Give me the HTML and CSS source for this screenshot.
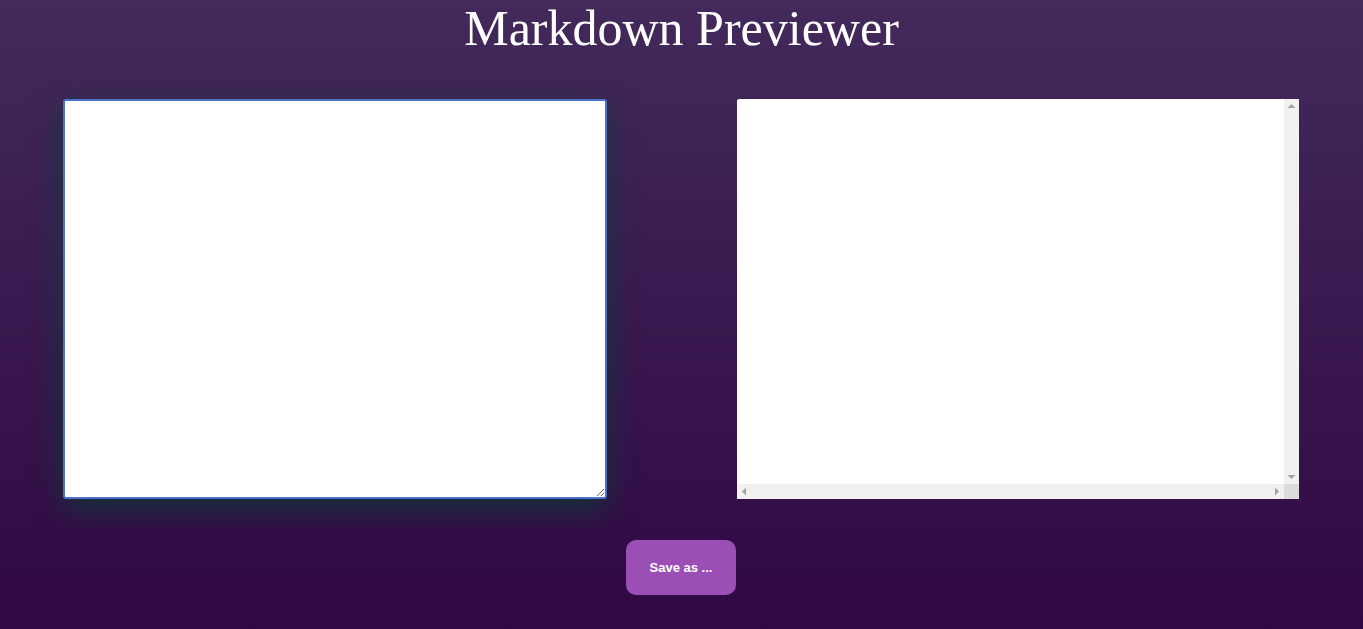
FILE: index.html
```html
<!DOCTYPE html>
<html lang="en">
<head>
<meta charset="utf-8">
<title>Markdown Previewer</title>
<link rel="stylesheet" href="styles.css">
</head>
<body>
  <h1 class="title">Markdown Previewer</h1>
  <main class="panes">
    <textarea class="editor" autofocus></textarea>
    <div class="preview">
      <div class="preview-content"></div>
      <div class="vscroll">
        <svg class="arrow" width="15" height="15" viewBox="0 0 15 15"><path d="M3.5 9 L11.5 9 L7.5 5 Z" fill="#a3a3a3"/></svg>
        <svg class="arrow" width="15" height="15" viewBox="0 0 15 15"><path d="M3.5 6 L11.5 6 L7.5 10 Z" fill="#a3a3a3"/></svg>
      </div>
      <div class="hscroll">
        <svg class="arrow" width="15" height="15" viewBox="0 0 15 15"><path d="M9 3.5 L9 11.5 L5 7.5 Z" fill="#a3a3a3"/></svg>
        <svg class="arrow" width="15" height="15" viewBox="0 0 15 15"><path d="M6 3.5 L6 11.5 L10 7.5 Z" fill="#a3a3a3"/></svg>
      </div>
      <div class="corner"></div>
    </div>
  </main>
  <div class="actions">
    <button class="save-btn" type="button">Save as ...</button>
  </div>
</body>
</html>
```

FILE: styles.css
```css
html, body {
  margin: 0;
  padding: 0;
}
body {
  min-height: 629px;
  background: linear-gradient(to bottom, #432a5b 0%, #300843 100%);
  font-family: "Liberation Serif", "Times New Roman", serif;
  overflow: hidden;
}
.title {
  margin: 0;
  text-align: center;
  font-weight: normal;
  font-size: 50px;
  line-height: 57px;
  color: #ffffff;
}
.panes {
  display: flex;
  justify-content: space-between;
  align-items: flex-start;
  margin-top: 42px;
  padding: 0 64px 0 63px;
}
.editor {
  box-sizing: border-box;
  width: 544px;
  height: 400px;
  margin: 0;
  padding: 4px;
  border: 2px solid #4d72c9;
  border-radius: 3px;
  background: #ffffff;
  outline: none;
  resize: both;
  box-shadow: 0 9px 30px rgba(0, 70, 52, 0.7);
  font-family: "Liberation Mono", monospace;
  font-size: 13px;
}
.preview {
  width: 562px;
  height: 400px;
  background: #ffffff;
  border-radius: 3px 0 0 0;
  overflow: hidden;
  display: grid;
  grid-template-columns: 1fr 15px;
  grid-template-rows: 1fr 15px;
}
.preview-content {
  background: #ffffff;
}
.vscroll {
  background: #f1f1f1;
  display: flex;
  flex-direction: column;
  justify-content: space-between;
}
.hscroll {
  background: #f1f1f1;
  display: flex;
  justify-content: space-between;
}
.arrow {
  display: block;
  flex: none;
}
.corner {
  background: #dcdcdc;
}
.actions {
  display: flex;
  justify-content: center;
  margin-top: 41px;
  padding-right: 1px;
}
.save-btn {
  width: 110px;
  height: 55px;
  border: none;
  border-radius: 10px;
  background: #9c4eb7;
  color: #ffffff;
  font-family: "Liberation Sans", Arial, sans-serif;
  font-weight: bold;
  font-size: 13px;
  cursor: pointer;
}
```
